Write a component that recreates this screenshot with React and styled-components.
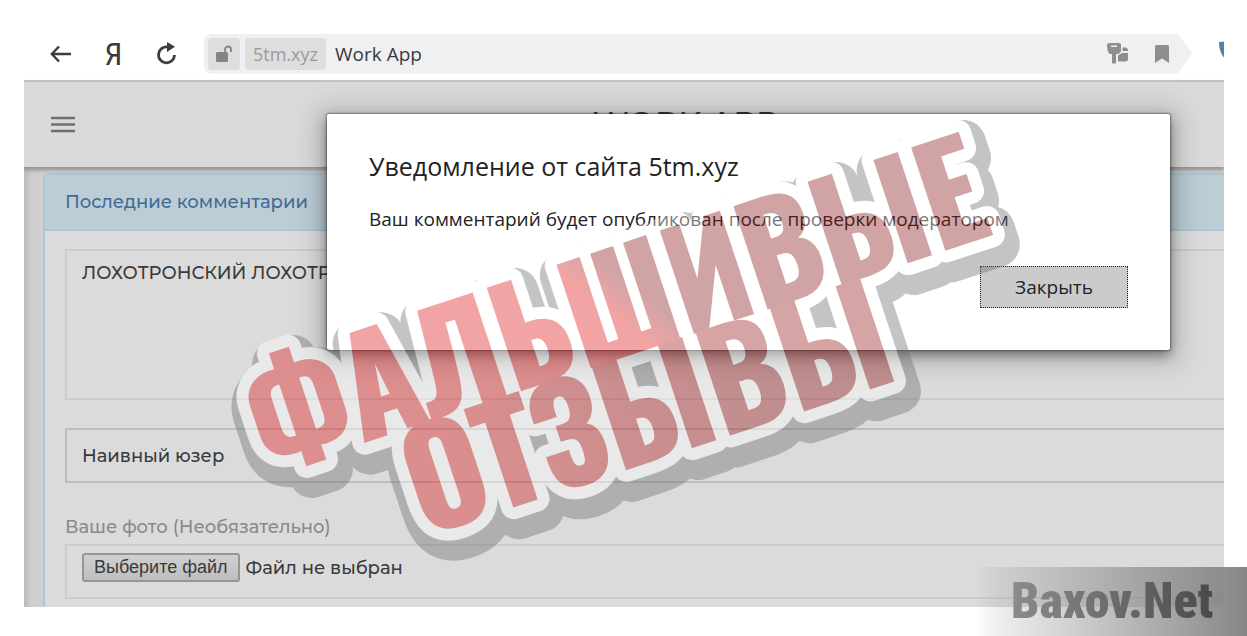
import React, { useState } from 'react'
import styled, { createGlobalStyle } from 'styled-components'

const GlobalStyle = createGlobalStyle`
    * {
        box-sizing: border-box;
    }
    body {
        margin: 0;
        background: #fff;
        font-family: "Montserrat", Inter, "Noto Sans", sans-serif;
        color: #3a3a3c;
    }
`
const Page = styled.div`
    position: relative;
    overflow: hidden;
    padding: 30px 23px 29px 24px;
`
const Window = styled.div`
    position: relative;
    height: 577px;
    overflow: hidden;
    background: #cfcfcf;
`
const Toolbar = styled.div`
    display: flex;
    align-items: center;
    height: 50px;
    padding: 0 0 3px 10px;
    background: #fff;
    font-family: "Open Sans", "Noto Sans", sans-serif;
`
const ToolButton = styled.button`
    display: flex;
    align-items: center;
    justify-content: center;
    flex: none;
    width: ${props => props.$width || 53}px;
    height: 40px;
    padding: 0;
    border: 0;
    background: none;
    color: ${props => props.$color || '#3c3c40'};
    font: 400 32px/40px "Roboto Condensed", Roboto, sans-serif;
`
const AddressBar = styled.div`
    display: flex;
    align-items: center;
    flex: 1;
    height: 40px;
    margin-left: 11px;
    padding: 0 13px 0 4px;
    gap: 5px;
    border-radius: 8px 0 0 8px;
    background: #eff0f1;
    clip-path: polygon(0 0, calc(100% - 14px) 0, 100% 50%, calc(100% - 14px) 100%, 0 100%);
`
const Chip = styled.span`
    display: flex;
    align-items: center;
    justify-content: center;
    height: 32px;
    padding: 0 8px;
    border-radius: 4px;
    background: #dedede;
    color: #9a9a9a;
    font-size: 18px;
`
const PageTitle = styled.span`
    flex: 1;
    padding-left: 4px;
    font-size: 19px;
`
const Shield = styled.svg`
    flex: none;
    margin: 0 -17px 6px 27px;
`
const SiteHeader = styled.header`
    position: relative;
    display: grid;
    grid-template-columns: 78px 1fr 78px;
    align-items: center;
    height: 87px;
    border-top: 2px solid #c2c2c2;
    background: #dadada;
    box-shadow: 0 3px 4px rgba(0, 0, 0, .3);
`
const SiteName = styled.h1`
    margin: 0 0 4px 124px;
    text-align: center;
    font-size: 32px;
    line-height: 36px;
    font-weight: 500;
`
const Content = styled.main`
    padding: 6px 0 0 19px;
    background: linear-gradient(to right, #bababa, #cfcfcf 8px);
`
const Panel = styled.section`
    margin-right: -20px;
    border: 2px solid #a9c8d4;
    border-radius: 6px;
    background: #dbdbdb;
`
const PanelTitle = styled.h2`
    margin: 0;
    padding: 0 20px;
    border-bottom: 2px solid #a9c8d4;
    background: #bccdd6;
    color: #3f6c94;
    font-size: 18px;
    line-height: 54px;
    font-weight: 500;
`
const Form = styled.form`
    display: flex;
    flex-direction: column;
    padding: 18px 0 40px 20px;
`
const Comment = styled.textarea`
    height: 151px;
    margin-bottom: 28px;
    padding: 6px 15px;
    border: 2px solid #cbcbcb;
    background: none;
    color: #3a3a3c;
    font: 500 18px/32px "Montserrat", Inter, "Noto Sans", sans-serif;
    resize: none;
`
const NameInput = styled.input`
    height: 55px;
    margin-bottom: 28px;
    padding: 0 15px;
    border: 2px solid #bebebe;
    background: none;
    color: #3a3a3c;
    font: 500 18px/32px "Montserrat", Inter, "Noto Sans", sans-serif;
`
const PhotoLabel = styled.label`
    margin-bottom: 1px;
    color: #8a8a8a;
    font-size: 18px;
    line-height: 32px;
    font-weight: 500;
`
const FileField = styled.label`
    display: flex;
    align-items: center;
    gap: 6px;
    height: 55px;
    padding: 0 15px 8px;
    border: 2px solid #cbcbcb;
    font-size: 18px;
    font-weight: 500;
`
const HiddenFile = styled.input`
    position: absolute;
    width: 1px;
    height: 1px;
    opacity: 0;
`
const FileButton = styled.span`
    padding: 0 10px;
    border: 2px solid #969696;
    border-radius: 3px;
    background: linear-gradient(#d0d0d0, #bebebe);
    font: 18px/25px "Liberation Sans", sans-serif;
`
const Dialog = styled.div`
    position: absolute;
    top: 84px;
    left: 303px;
    right: 54px;
    display: flex;
    flex-direction: column;
    padding: 34px 42px 42px;
    border-radius: 2px;
    background: #fff;
    color: #222;
    font-family: "Open Sans", "Noto Sans", sans-serif;
    box-shadow: 0 0 2px 1px rgba(0, 0, 0, .35), 0 5px 12px rgba(0, 0, 0, .4), 0 4px 26px 10px rgba(0, 0, 0, .17);
`
const DialogTitle = styled.h2`
    margin: 0;
    font-size: 25px;
    line-height: 36px;
    font-weight: 400;
`
const DialogText = styled.p`
    margin: 20px 0 31px;
    font-size: 19px;
    line-height: 31px;
`
const CloseButton = styled.button`
    align-self: flex-end;
    width: 148px;
    height: 42px;
    border: 1px dotted #222;
    background: #cbcbcb;
    color: #222;
    font: 19px "Open Sans", "Noto Sans", sans-serif;
`
const Sticker = styled.svg`
    position: absolute;
    top: 0;
    left: 0;
    opacity: .4;
    pointer-events: none;
    font-family: Oswald, "Roboto Condensed", "Liberation Sans Narrow", "DejaVu Sans Condensed", sans-serif;
    font-size: 132px;
    font-weight: 700;
`
const Watermark = styled.a`
    position: absolute;
    right: 0;
    bottom: 0;
    width: 272px;
    height: 69px;
    padding-left: 36px;
    background: linear-gradient(to right, rgba(128, 128, 128, 0), rgba(128, 128, 128, .12) 20px, rgba(128, 128, 128, .95));
    text-decoration: none;
    font: 900 50px/69px "Roboto Condensed", Impact, "Liberation Sans Narrow", sans-serif;
`
const WatermarkText = styled.span`
    display: inline-block;
    background: linear-gradient(to right, #8c8c8c, #6c6c6e 50%, #4a4a4d);
    background-clip: text;
    color: transparent;
`

const StickerLines = ({ fills = [] }) => (
    <g transform="rotate(-18.3)">
        <text x="105" y="534" fill={fills[0]} stroke={fills[0]}>ФАЛЬШИВЫЕ</text>
        <text x="235" y="642" fill={fills[1]} stroke={fills[1]}>ОТЗЫВЫ</text>
    </g>
)

const App = () => {
    const [open, setOpen] = useState(true)
    const [comment, setComment] = useState('ЛОХОТРОНСКИЙ ЛОХОТРОН')
    const [name, setName] = useState('Наивный юзер')

    return (
        <Page>
            <GlobalStyle />
            <Window>
                <Toolbar>
                    <ToolButton aria-label="Назад">
                        <svg width="22" height="18" viewBox="0 0 22 18" fill="none" stroke="currentColor" strokeWidth="2.4">
                            <path d="M21 9H2M9 1.5L1.8 9L9 16.5" />
                        </svg>
                    </ToolButton>
                    <ToolButton>Я</ToolButton>
                    <ToolButton aria-label="Обновить">
                        <svg width="22" height="24" viewBox="0 0 22 24" fill="none" stroke="currentColor" strokeWidth="2.8">
                            <path d="M12 5A8 8 0 1 0 18.500 13" />
                            <path d="M11 0L19 4.8L11 10Z" fill="currentColor" stroke="none" />
                        </svg>
                    </ToolButton>
                    <AddressBar>
                        <Chip>
                            <svg width="16" height="18" viewBox="0 0 16 18">
                                <rect x="0" y="7" width="12" height="10" rx="1.500" fill="#858585" />
                                <path d="M9 7V4.500A3 3 0 0 1 15 4.500V7" fill="none" stroke="#858585" strokeWidth="1.800" />
                            </svg>
                        </Chip>
                        <Chip>5tm.xyz</Chip>
                        <PageTitle>Work App</PageTitle>
                        <ToolButton $width={44} $color="#8e8e8e" aria-label="Пароли">
                            <svg width="22" height="21" viewBox="0 0 22 21" fill="currentColor">
                                <path fillRule="evenodd" d="M2 0H12Q14 0 14 2V7Q14 10 11 11H9V20Q7 21.500 5 20V11H3Q1 10 .5 7L0 2Q0 0 2 0ZM4 2.500V4H10V2.500Z" />
                                <path d="M15.500 4.500H18Q21 4.500 21 8H15.500ZM11 12.500L15 10H21V16Q21 18.500 18 18.500H11Z" />
                            </svg>
                        </ToolButton>
                        <ToolButton $width={34} $color="#8e8e8e" aria-label="Закладка">
                            <svg width="14" height="18" viewBox="0 0 14 18" fill="currentColor">
                                <path d="M1.500 0H12.500Q14 0 14 1.500V18L7 13.500L0 18V1.500Q0 0 1.500 0Z" />
                            </svg>
                        </ToolButton>
                    </AddressBar>
                    <Shield width="22" height="24" viewBox="0 0 22 24">
                        <path d="M0 3Q6 3 11 0Q16 3 22 3Q22 17 11 24Q0 17 0 3Z" fill="#4d81a8" />
                    </Shield>
                </Toolbar>
                <SiteHeader>
                    <ToolButton $width={78} $color="#6f6f6f" aria-label="Меню">
                        <svg width="24" height="17" viewBox="0 0 24 17" stroke="currentColor" strokeWidth="2.600">
                            <path d="M0 2H24M0 8.500H24M0 15H24" />
                        </svg>
                    </ToolButton>
                    <SiteName>WORK APP</SiteName>
                </SiteHeader>
                <Content>
                    <Panel>
                        <PanelTitle>Последние комментарии</PanelTitle>
                        <Form onSubmit={e => e.preventDefault()}>
                            <Comment aria-label="Комментарий" value={comment} onChange={e => setComment(e.target.value)} />
                            <NameInput aria-label="Имя" value={name} onChange={e => setName(e.target.value)} />
                            <PhotoLabel htmlFor="photo">Ваше фото (Необязательно)</PhotoLabel>
                            <FileField>
                                <HiddenFile id="photo" type="file" />
                                <FileButton>Выберите файл</FileButton>
                                Файл не выбран
                            </FileField>
                        </Form>
                    </Panel>
                </Content>
                {open && (
                    <Dialog role="dialog" aria-labelledby="dialog-title">
                        <DialogTitle id="dialog-title">Уведомление от сайта 5tm.xyz</DialogTitle>
                        <DialogText>Ваш комментарий будет опубликован после проверки модератором</DialogText>
                        <CloseButton onClick={() => setOpen(false)}>Закрыть</CloseButton>
                    </Dialog>
                )}
            </Window>
            <Sticker width="1247" height="636" aria-hidden="true">
                <defs>
                    <linearGradient id="top" gradientUnits="userSpaceOnUse" x1="455" y1="450" x2="485" y2="430">
                        <stop offset="0" stopColor="#e11e1e" />
                        <stop offset="1" stopColor="#8c1e1e" />
                    </linearGradient>
                    <linearGradient id="bottom" gradientUnits="userSpaceOnUse" x1="300" y1="600" x2="600" y2="560">
                        <stop offset="0" stopColor="#d91e1e" />
                        <stop offset="1" stopColor="#981e1e" />
                    </linearGradient>
                </defs>
                {/* shadow, outline, then the letters themselves */}
                <g transform="translate(5 10)" fill="#6e6e6e" stroke="#6e6e6e" strokeWidth="46" strokeLinejoin="round">
                    <StickerLines />
                </g>
                <g fill="#fff" stroke="#fff" strokeWidth="26" strokeLinejoin="round">
                    <StickerLines />
                </g>
                <g strokeWidth="2">
                    <StickerLines fills={['url(#top)', 'url(#bottom)']} />
                </g>
            </Sticker>
            <Watermark href="#">
                <WatermarkText>Baxov.Net</WatermarkText>
            </Watermark>
        </Page>
    )
}

export default App
